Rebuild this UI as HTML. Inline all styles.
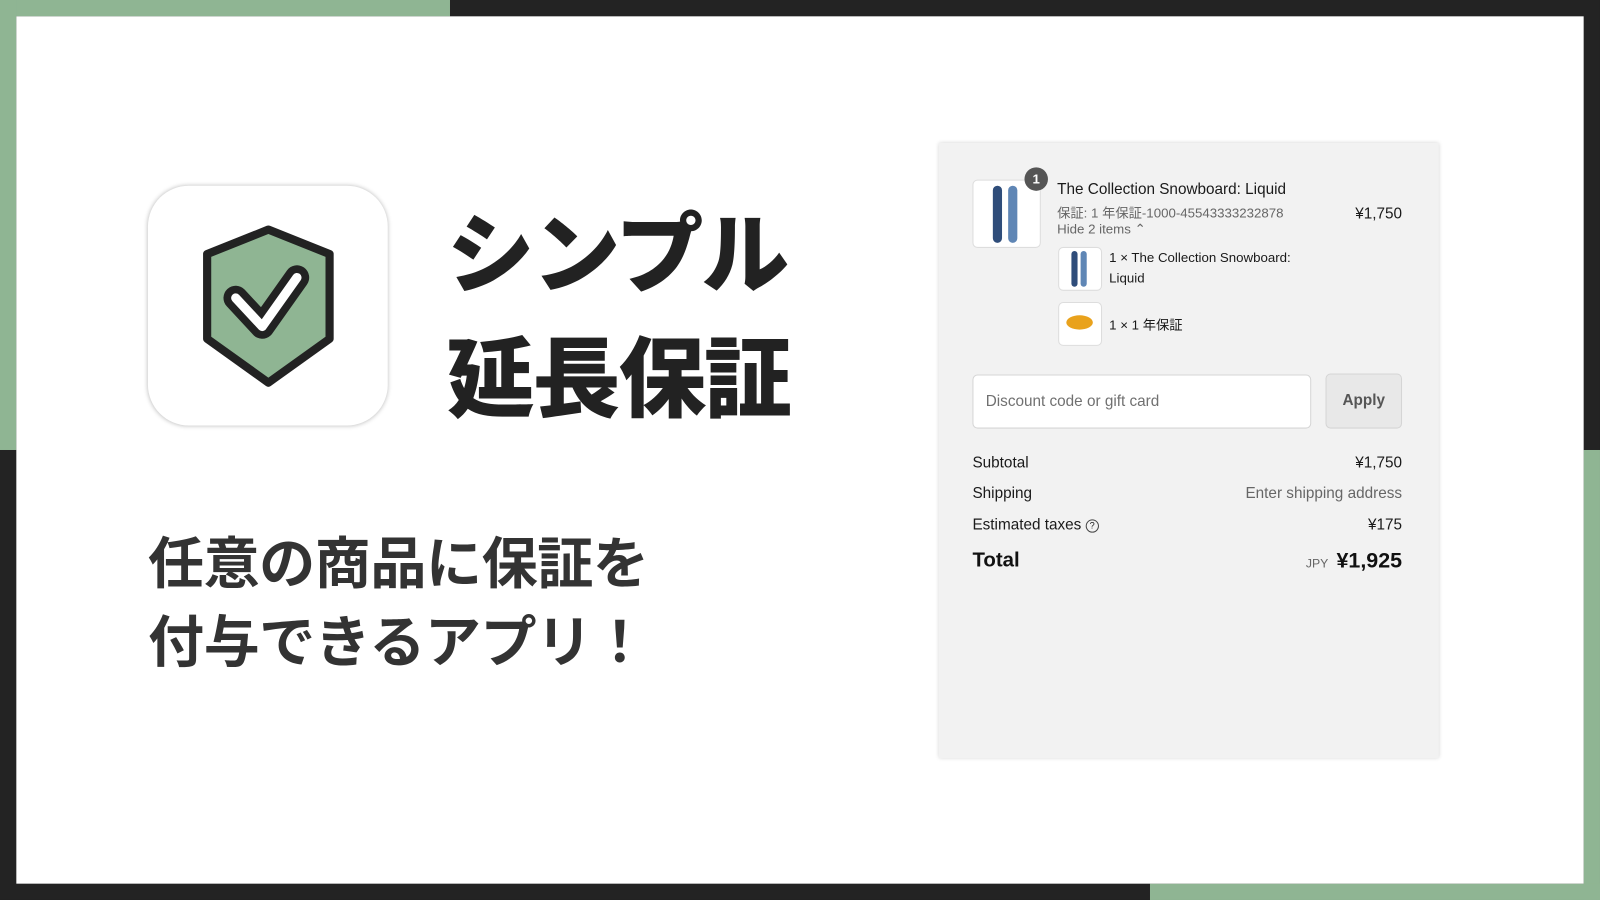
<!DOCTYPE html>
<html><head><meta charset="utf-8"><style>
*{margin:0;padding:0;box-sizing:border-box}
html,body{width:1600px;height:900px;overflow:hidden;background:#232323}
#w{position:absolute;left:0;top:0;width:1568px;height:882px;transform:scale(1.0204);transform-origin:0 0;background:#232323;font-family:"Liberation Sans","Noto Sans CJK JP",sans-serif}
.a{position:absolute}
.jp{font-family:"Noto Sans CJK JP",sans-serif;font-weight:900;color:#222}
.c{color:#1a1a1a;font-size:14px}
.g{color:#666}
.r{text-align:right;right:194px}
.th{position:absolute;background:#fff;border:1px solid #ddd;border-radius:5px}
</style></head><body><div id="w">
<div class="a" style="left:0;top:0;width:441px;height:16px;background:#8fb593"></div>
<div class="a" style="left:0;top:0;width:16px;height:441px;background:#8fb593"></div>
<div class="a" style="left:1552px;top:441px;width:16px;height:441px;background:#8fb593"></div>
<div class="a" style="left:1127px;top:866px;width:441px;height:16px;background:#8fb593"></div>
<div class="a" style="left:16px;top:16px;width:1536px;height:850px;background:#fff"></div>

<div class="a" style="left:145px;top:182px;width:235px;height:235px;border-radius:40px;background:#fff;box-shadow:0 0 4px rgba(0,0,0,.25)"></div>
<svg class="a" style="left:145px;top:182px" width="235" height="235" viewBox="0 0 235 235">
<path d="M118 43 L178 67 L178 150 L118 193 L58 150 L58 67 Z" fill="#8fb593" stroke="#222" stroke-width="8" stroke-linejoin="round"/>
<path d="M86 110 L112 138 L146 90" fill="none" stroke="#222" stroke-width="24" stroke-linecap="round" stroke-linejoin="round"/>
<path d="M86 110 L112 138 L146 90" fill="none" stroke="#fff" stroke-width="9" stroke-linecap="round" stroke-linejoin="round"/>
</svg>
<div class="a jp" style="left:438px;top:188px;font-size:86px;line-height:110px;letter-spacing:-2px">シンプル</div>
<div class="a jp" style="left:438px;top:310px;font-size:86px;line-height:110px;letter-spacing:-2px">延長保証</div>
<div class="a jp" style="left:145px;top:510px;font-size:55px;line-height:77px;font-weight:700;color:#333;letter-spacing:-0.5px">任意の商品に保証を<br>付与できるアプリ！</div>

<div class="a" style="left:920px;top:140px;width:490px;height:603px;background:#f2f2f2;box-shadow:0 0 4px rgba(0,0,0,.2)"></div>
<div class="th" style="left:953px;top:176px;width:67px;height:67px"></div>
<div class="a" style="left:973px;top:182px;width:9px;height:56px;border-radius:5px;background:#2f4d7a"></div>
<div class="a" style="left:988px;top:182px;width:9px;height:56px;border-radius:5px;background:#5f86b5"></div>
<div class="a" style="left:1004px;top:164px;width:23px;height:23px;border-radius:50%;background:#555;color:#fff;font-size:13px;font-weight:bold;text-align:center;line-height:23px">1</div>
<div class="a" style="left:1036px;top:177px;font-size:15px;color:#1a1a1a">The Collection Snowboard: Liquid</div>
<div class="a g" style="left:1036px;top:198px;font-size:13px">保証: 1 年保証-1000-45543333232878</div>
<div class="a g" style="left:1036px;top:217px;font-size:13px">Hide 2 items ⌃</div>
<div class="a c r" style="top:201px;font-size:15px">¥1,750</div>
<div class="th" style="left:1037px;top:242px;width:43px;height:43px"></div>
<div class="a" style="left:1050px;top:246px;width:6px;height:35px;border-radius:3px;background:#2f4d7a"></div>
<div class="a" style="left:1059px;top:246px;width:6px;height:35px;border-radius:3px;background:#5f86b5"></div>
<div class="a c" style="left:1087px;top:243px;font-size:13px;line-height:20px">1 × The Collection Snowboard:<br>Liquid</div>
<div class="th" style="left:1037px;top:296px;width:43px;height:43px"></div>
<div class="a" style="left:1045px;top:309px;width:26px;height:14px;border-radius:50%;background:#e9a21c"></div>
<div class="a c" style="left:1087px;top:308px;font-size:13px">1 × 1 年保証</div>

<div class="a" style="left:953px;top:367px;width:332px;height:53px;background:#fff;border:1px solid #d5d5d5;border-radius:5px;color:#707070;font-size:15px;padding:17px 0 0 12px">Discount code or gift card</div>
<div class="a" style="left:1299px;top:366px;width:75px;height:54px;background:#e8e8e8;border:1px solid #d5d5d5;border-radius:5px;color:#555;font-size:15px;font-weight:bold;text-align:center;line-height:52px">Apply</div>

<div class="a c" style="left:953px;top:445px;font-size:15px">Subtotal</div>
<div class="a c r" style="top:445px;font-size:15px">¥1,750</div>
<div class="a c" style="left:953px;top:475px;font-size:15px">Shipping</div>
<div class="a g r" style="top:475px;font-size:15px">Enter shipping address</div>
<div class="a c" style="left:953px;top:506px;font-size:15px">Estimated taxes <span style="display:inline-block;width:13px;height:13px;border:1.5px solid #444;border-radius:50%;font-size:9px;text-align:center;line-height:10px;vertical-align:1px">?</span></div>
<div class="a c r" style="top:506px;font-size:15px">¥175</div>
<div class="a" style="left:953px;top:538px;font-size:20px;font-weight:bold;color:#111">Total</div>
<div class="a r" style="top:538px;font-size:21px;font-weight:bold;color:#111"><span style="font-size:12px;font-weight:normal;color:#666;margin-right:8px">JPY</span>¥1,925</div>
</div></body></html>
